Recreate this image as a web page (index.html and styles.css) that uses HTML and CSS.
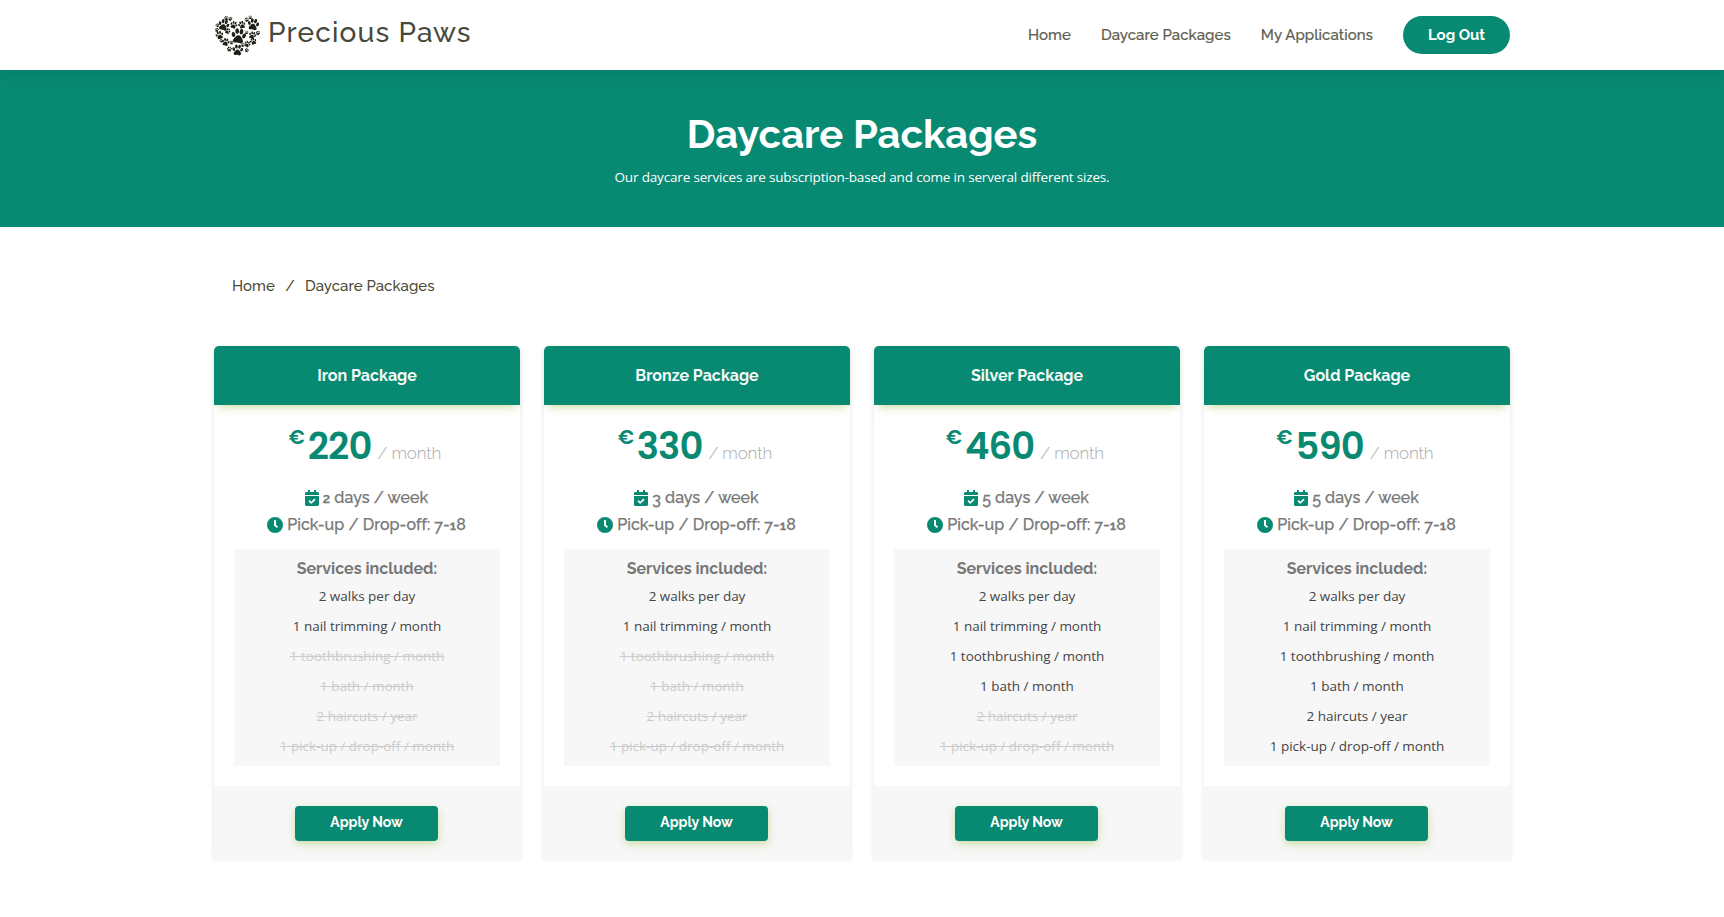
FILE: index.html
```
<!DOCTYPE html>
<html lang="en">
<head>
<meta charset="utf-8">
<title>Daycare Packages - Precious Paws</title>
<link rel="stylesheet" href="styles.css">
</head>
<body>
<svg class="sprite" aria-hidden="true">
  <symbol id="paw" viewBox="0 0 20 20"><ellipse cx="3" cy="9" rx="2.3" ry="3.3" transform="rotate(-22 3 9)"/><ellipse cx="7.2" cy="4" rx="2.4" ry="3.7" transform="rotate(-6 7.2 4)"/><ellipse cx="12.8" cy="4" rx="2.4" ry="3.7" transform="rotate(6 12.8 4)"/><ellipse cx="17" cy="9" rx="2.3" ry="3.3" transform="rotate(22 17 9)"/><path d="M10 9C7 9 6 12 4.300 14C2 17 4.500 20 7.300 19C9 18.300 11 18.300 12.700 19C15.500 20 18 17 15.700 14C14 12 13 9 10 9Z"/></symbol>
  <symbol id="calendar" viewBox="0 0 448 512"><path d="M436 160H12c-6.600 0-12-5.400-12-12v-36c0-26.500 21.500-48 48-48h48V12c0-6.600 5.400-12 12-12h40c6.600 0 12 5.400 12 12v52h128V12c0-6.600 5.400-12 12-12h40c6.600 0 12 5.400 12 12v52h48c26.500 0 48 21.500 48 48v36c0 6.600-5.400 12-12 12zM12 192h424c6.600 0 12 5.400 12 12v260c0 26.500-21.500 48-48 48H48c-26.500 0-48-21.500-48-48V204c0-6.600 5.400-12 12-12zm321 112l-24-24c-5-5-12-5-17 0L199 373l-43-43c-5-5-12-5-17 0l-20 20c-5 5-5 12 0 17l71 71c5 5 12 5 17 0l126-117c5-5 5-12 0-17z"/></symbol>
  <symbol id="clock" viewBox="0 0 512 512"><path d="M256 0a256 256 0 1 0 0 512 256 256 0 0 0 0-512zm92.500 313l-20 25a16 16 0 0 1-22.500 2.500l-67-49.700a40 40 0 0 1-15-31.200V112a16 16 0 0 1 16-16h32a16 16 0 0 1 16 16v144l58 42.500a16 16 0 0 1 2.500 22.500z"/></symbol>
</svg>

<header class="navbar">
  <div class="container navbar-inner">
    <a class="brand">
      <svg class="brand-mark" viewBox="12 12 144 126">
        <use href="#paw" x="63" y="52" width="46" height="46" transform="rotate(8 86 75)"/>
        <use href="#paw" x="112" y="22" width="36" height="36" transform="rotate(10 130 40)"/>
        <use href="#paw" x="24" y="24" width="35" height="35" transform="rotate(16 41 41)"/>
        <use href="#paw" x="66" y="100" width="34" height="34" transform="rotate(5 83 117)"/>
        <use href="#paw" x="60" y="30" width="23" height="23" transform="rotate(20 71 41)"/>
        <use href="#paw" x="84" y="30" width="23" height="23" transform="rotate(-15 95 41)"/>
        <use href="#paw" x="42" y="15" width="14" height="14"/>
        <use href="#paw" x="55" y="17" width="13" height="13" transform="rotate(30 61 23)"/>
        <use href="#paw" x="103" y="19" width="14" height="14" transform="rotate(-20 110 26)"/>
        <use href="#paw" x="115" y="13" width="12" height="12"/>
        <use href="#paw" x="16" y="37" width="12" height="12" transform="rotate(-30 22 43)"/>
        <use href="#paw" x="14" y="50" width="13" height="13"/>
        <use href="#paw" x="16" y="60" width="25" height="25" transform="rotate(-15 28 72)"/>
        <use href="#paw" x="44" y="51" width="18" height="18" transform="rotate(25 53 60)"/>
        <use href="#paw" x="35" y="81" width="24" height="24" transform="rotate(12 47 93)"/>
        <use href="#paw" x="28" y="84" width="11" height="11"/>
        <use href="#paw" x="58" y="88" width="13" height="13"/>
        <use href="#paw" x="50" y="106" width="16" height="16"/>
        <use href="#paw" x="104" y="58" width="12" height="12"/>
        <use href="#paw" x="116" y="61" width="23" height="23" transform="rotate(20 127 72)"/>
        <use href="#paw" x="137" y="59" width="14" height="14" transform="rotate(15 144 66)"/>
        <use href="#paw" x="119" y="80" width="21" height="21" transform="rotate(-20 130 90)"/>
        <use href="#paw" x="102" y="89" width="20" height="20" transform="rotate(25 112 99)"/>
        <use href="#paw" x="92" y="96" width="12" height="12"/>
        <use href="#paw" x="104" y="111" width="13" height="13" transform="rotate(20 110 117)"/>
      </svg>
      <span class="brand-name">Precious Paws</span>
    </a>
    <nav class="nav-links">
      <a class="nav-link">Home</a>
      <a class="nav-link">Daycare Packages</a>
      <a class="nav-link">My Applications</a>
      <a class="logout">Log Out</a>
    </nav>
  </div>
</header>

<section class="hero">
  <h1 class="hero-title">Daycare Packages</h1>
  <p class="hero-text">Our daycare services are subscription-based and come in serveral different sizes.</p>
</section>

<main class="container">
  <nav class="breadcrumb"><a class="crumb">Home</a><span class="crumb-sep">/</span><a class="crumb">Daycare Packages</a></nav>
  <div class="packages">
    <article class="card">
      <h2 class="card-title">Iron Package</h2>
      <div class="card-body">
        <div class="price"><span class="currency">€</span><span class="amount">220</span><span class="period">/ month</span></div>
        <p class="fact"><svg class="icon-calendar"><use href="#calendar"/></svg><span><span class="num-small">2</span> days / week</span></p>
        <p class="fact"><svg class="icon-clock"><use href="#clock"/></svg><span>Pick-up / Drop-off: <span class="num-low">7</span>-<span class="num-small">1</span>8</span></p>
        <div class="services">
          <h3 class="services-title">Services included:</h3>
          <ul class="service-list">
            <li>2 walks per day</li><li>1 nail trimming / month</li><li class="off"><s>1 toothbrushing / month</s></li><li class="off"><s>1 bath / month</s></li><li class="off"><s>2 haircuts / year</s></li><li class="off"><s>1 pick-up / drop-off / month</s></li>
          </ul>
        </div>
      </div>
      <footer class="card-footer"><a class="apply">Apply Now</a></footer>
    </article>
    <article class="card">
      <h2 class="card-title">Bronze Package</h2>
      <div class="card-body">
        <div class="price"><span class="currency">€</span><span class="amount">330</span><span class="period">/ month</span></div>
        <p class="fact"><svg class="icon-calendar"><use href="#calendar"/></svg><span><span class="num-low">3</span> days / week</span></p>
        <p class="fact"><svg class="icon-clock"><use href="#clock"/></svg><span>Pick-up / Drop-off: <span class="num-low">7</span>-<span class="num-small">1</span>8</span></p>
        <div class="services">
          <h3 class="services-title">Services included:</h3>
          <ul class="service-list">
            <li>2 walks per day</li><li>1 nail trimming / month</li><li class="off"><s>1 toothbrushing / month</s></li><li class="off"><s>1 bath / month</s></li><li class="off"><s>2 haircuts / year</s></li><li class="off"><s>1 pick-up / drop-off / month</s></li>
          </ul>
        </div>
      </div>
      <footer class="card-footer"><a class="apply">Apply Now</a></footer>
    </article>
    <article class="card">
      <h2 class="card-title">Silver Package</h2>
      <div class="card-body">
        <div class="price"><span class="currency">€</span><span class="amount">460</span><span class="period">/ month</span></div>
        <p class="fact"><svg class="icon-calendar"><use href="#calendar"/></svg><span><span class="num-low">5</span> days / week</span></p>
        <p class="fact"><svg class="icon-clock"><use href="#clock"/></svg><span>Pick-up / Drop-off: <span class="num-low">7</span>-<span class="num-small">1</span>8</span></p>
        <div class="services">
          <h3 class="services-title">Services included:</h3>
          <ul class="service-list">
            <li>2 walks per day</li><li>1 nail trimming / month</li><li>1 toothbrushing / month</li><li>1 bath / month</li><li class="off"><s>2 haircuts / year</s></li><li class="off"><s>1 pick-up / drop-off / month</s></li>
          </ul>
        </div>
      </div>
      <footer class="card-footer"><a class="apply">Apply Now</a></footer>
    </article>
    <article class="card">
      <h2 class="card-title">Gold Package</h2>
      <div class="card-body">
        <div class="price"><span class="currency">€</span><span class="amount">590</span><span class="period">/ month</span></div>
        <p class="fact"><svg class="icon-calendar"><use href="#calendar"/></svg><span><span class="num-low">5</span> days / week</span></p>
        <p class="fact"><svg class="icon-clock"><use href="#clock"/></svg><span>Pick-up / Drop-off: <span class="num-low">7</span>-<span class="num-small">1</span>8</span></p>
        <div class="services">
          <h3 class="services-title">Services included:</h3>
          <ul class="service-list">
            <li>2 walks per day</li><li>1 nail trimming / month</li><li>1 toothbrushing / month</li><li>1 bath / month</li><li>2 haircuts / year</li><li>1 pick-up / drop-off / month</li>
          </ul>
        </div>
      </div>
      <footer class="card-footer"><a class="apply">Apply Now</a></footer>
    </article>
  </div>
</main>
</body>
</html>
```

FILE: styles.css
```
* { box-sizing: border-box; }
body { margin: 0; background: #fff; font-family: Raleway, Lato, sans-serif; color: #444; overflow: hidden; }
h1, h2, h3, p, ul { margin: 0; padding: 0; }
.sprite { display: none; }
.container { width: 1296px; margin: 0 auto; }

.navbar { position: relative; z-index: 1; height: 70px; background: #fff; box-shadow: 0 2px 15px rgba(0, 0, 0, .1); }
.navbar-inner { display: flex; justify-content: space-between; height: 70px; }
.brand { display: flex; color: #45483a; }
.brand-mark { width: 48px; height: 42px; margin-top: 15px; fill: #1c1f15; }
.brand-name { margin-left: 6px; font-size: 28px; line-height: 66px; font-weight: 500; letter-spacing: 1.15px; white-space: nowrap; }
.nav-links { display: flex; align-items: center; font-weight: 500; font-size: 15px; color: #5e6150; white-space: nowrap; }
.nav-link { margin-right: 30px; letter-spacing: .06px; -webkit-text-stroke: .2px #5e6150; }
.logout { display: flex; align-items: center; justify-content: center; width: 107px; height: 38px; border-radius: 50px; background: #088972; color: #fff; font-weight: 700; }

.hero { height: 157px; padding-top: 37px; background: #088972; color: #fff; text-align: center; }
.hero-title { font-size: 40px; line-height: 54px; font-weight: 700; }
.hero-text { margin-top: 4px; font: 13.5px/24px "Open Sans", sans-serif; letter-spacing: -.17px; }

.breadcrumb { display: flex; height: 119px; padding: 47px 18px 0; font-size: 15px; line-height: 24px; font-weight: 500; letter-spacing: .04px; color: #4b4a36; }
.crumb-sep { margin: 0 10.3px; }

.packages { display: grid; grid-template-columns: repeat(4, 306px); gap: 24px; }
.card { height: 515px; border-radius: 5px; background: #fff; box-shadow: 0 1px 5px rgba(0, 0, 0, .1); text-align: center; white-space: nowrap; }
.card-title { height: 59px; border-radius: 5px 5px 0 0; background: #088972; box-shadow: 0 6px 8px -4px rgba(150, 190, 70, .5); color: #f4faf8; font-size: 16px; line-height: 59px; font-weight: 700; }
.card-body { height: 381px; padding: 20px 20px 0; }
.price { display: flex; justify-content: center; height: 59px; padding-right: 4px; color: #088972; }
.currency { margin-right: 3px; font: 600 20px/24px Poppins, Inter, sans-serif; }
.amount { font: 600 37px/43px Poppins, Inter, sans-serif; letter-spacing: -.9px; }
.period { margin-left: 6px; font-size: 17px; font-weight: 300; line-height: 57px; letter-spacing: -.15px; color: #aaa; }
.fact { display: flex; justify-content: center; align-items: center; height: 27px; padding-right: 1px; color: #777; font-size: 16px; line-height: 27px; font-weight: 500; letter-spacing: .06px; -webkit-text-stroke: .25px #777; }
.num-small { font-size: .84em; font-weight: 600; line-height: 1; }
.num-low { line-height: 1; vertical-align: -.13em; }
.icon-calendar { width: 14px; height: 16px; margin-right: 4px; fill: #088972; stroke: none; }
.icon-clock { width: 16px; height: 16px; margin-right: 4px; fill: #088972; stroke: none; }
.services { height: 217px; margin-top: 11px; padding-top: 6px; background: #f7f7f7; }
.services-title { color: #777; font-size: 16px; line-height: 28px; font-weight: 700; }
.service-list { list-style: none; margin-top: -2px; font: 13.5px/30px "Open Sans", sans-serif; letter-spacing: -.02px; color: #444; }
.off { color: #ccc; }
.card-footer { display: flex; justify-content: center; height: 75px; padding: 20px 1px 0 0; border-radius: 0 0 5px 5px; background: #f7f7f7; }
.apply { width: 143px; height: 35px; border-radius: 4px; background: #088972; box-shadow: 0 3px 8px rgba(150, 190, 70, .45); color: #fff; font-size: 14px; line-height: 32px; font-weight: 700; }
```
